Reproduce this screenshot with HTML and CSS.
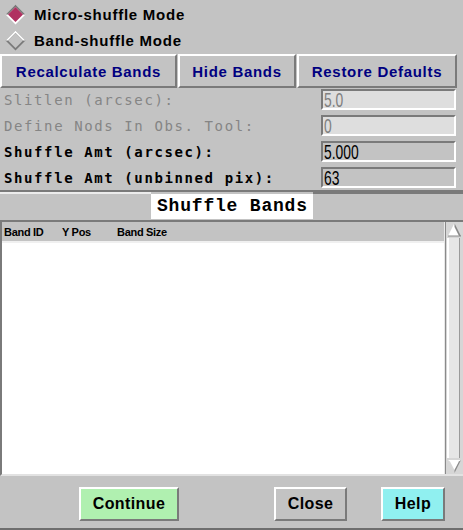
FILE: index.html
```html
<!DOCTYPE html>
<html>
<head>
<meta charset="utf-8">
<link rel="stylesheet" href="styles.css">
</head>
<body>
<div class="win">
  <div class="radios">
    <div class="radio">
      <svg class="dia" width="21" height="21" viewBox="0 0 21 21">
        <polygon points="10.5,0.5 20.5,10.5 10.5,20.5 0.5,10.5" fill="#ffffff"/>
        <polygon points="10.5,0.5 20.5,10.5 18,10.5 10.5,3 3,10.5 0.5,10.5" fill="#7a7a7a"/>
        <polygon points="10.5,3 18,10.5 10.5,18 3,10.5" fill="#b03060"/>
      </svg>
      <span class="rtext">Micro-shuffle Mode</span>
    </div>
    <div class="radio">
      <svg class="dia" width="21" height="21" viewBox="0 0 21 21">
        <polygon points="10.5,0.5 20.5,10.5 10.5,20.5 0.5,10.5" fill="#7a7a7a"/>
        <polygon points="10.5,0.5 20.5,10.5 18,10.5 10.5,3 3,10.5 0.5,10.5" fill="#ffffff"/>
        <polygon points="10.5,3 18,10.5 10.5,18 3,10.5" fill="#c3c3c3"/>
      </svg>
      <span class="rtext">Band-shuffle Mode</span>
    </div>
  </div>
  <div class="actions">
    <button class="btn navy w1">Recalculate Bands</button>
    <button class="btn navy w2">Hide Bands</button>
    <button class="btn navy w3">Restore Defaults</button>
  </div>
  <div class="fields">
    <div class="row off"><span class="lbl">Slitlen (arcsec):</span><span class="fld dis"><span class="val">5.0</span></span></div>
    <div class="row off"><span class="lbl">Define Nods In Obs. Tool:</span><span class="fld dis"><span class="val">0</span></span></div>
    <div class="row"><span class="lbl">Shuffle Amt (arcsec):</span><span class="fld"><span class="val">5.000</span></span></div>
    <div class="row"><span class="lbl">Shuffle Amt (unbinned pix):</span><span class="fld"><span class="val">63</span></span></div>
  </div>
  <div class="sep"></div>
  <div class="titlerow">
    <div class="tl"></div>
    <div class="title">Shuffle Bands</div>
    <div class="tr"></div>
  </div>
  <div class="table">
    <div class="grid">
      <div class="head">
        <span class="c1">Band ID</span>
        <span class="c2">Y Pos</span>
        <span class="c3">Band Size</span>
      </div>
      <div class="tbody"></div>
    </div>
    <div class="scroll">
      <svg class="arrow" width="17" height="15" viewBox="0 0 17 15">
        <polygon points="8.5,1 15,14 2,14" fill="#ffffff"/>
        <polygon points="8.5,1 15,14 13,14 8.5,5" fill="#8a8a8a"/>
        <line x1="2" y1="14" x2="15" y2="14" stroke="#8a8a8a" stroke-width="1"/>
      </svg>
      <div class="thumb"></div>
      <svg class="arrow" width="17" height="15" viewBox="0 0 17 15">
        <polygon points="2,1 15,1 8.5,14" fill="#d8d8d8"/>
        <polygon points="2,1 15,1 13,2.5 8.5,11 4,2.5" fill="#ffffff"/>
        <polygon points="15,1 8.5,14 8.5,11 13,2.5" fill="#8a8a8a"/>
      </svg>
    </div>
  </div>
  <div class="footer">
    <button class="btn fb green">Continue</button>
    <button class="btn fb close">Close</button>
    <button class="btn fb cyan">Help</button>
  </div>
</div>
</body>
</html>
```
FILE: styles.css
```css
html, body {
  margin: 0;
  padding: 0;
  background: #c3c3c3;
}
.win {
  width: 463px;
  height: 530px;
  background: #c3c3c3;
  display: flex;
  flex-direction: column;
  box-sizing: border-box;
  border-bottom: 2px solid #6e6e6e;
  overflow: hidden;
}
.radios {
  padding-top: 1px;
  display: flex;
  flex-direction: column;
}
.radio {
  height: 26px;
  display: flex;
  align-items: center;
  padding-left: 5px;
}
.dia {
  display: block;
  flex: none;
}
.rtext {
  margin-left: 8px;
  font-family: "Liberation Sans", Arial, sans-serif;
  font-weight: bold;
  font-size: 15px;
  letter-spacing: 0.75px;
  color: #000;
}
.actions {
  margin-top: 1px;
  display: flex;
  gap: 1px;
}
.btn {
  box-sizing: border-box;
  height: 34px;
  margin: 0;
  padding: 0;
  background: #c3c3c3;
  border-style: solid;
  border-width: 2px;
  border-color: #ffffff #7a7a7a #7a7a7a #ffffff;
  font-family: "Liberation Sans", Arial, sans-serif;
  font-weight: bold;
  font-size: 15px;
  letter-spacing: 0.7px;
  color: #000;
  display: flex;
  align-items: center;
  justify-content: center;
}
.navy { color: #000080; }
.w1 { width: 177px; }
.w2 { width: 118px; }
.w3 { width: 160px; }
.fields {
  padding-top: 1px;
  display: flex;
  flex-direction: column;
  gap: 5px;
}
.row {
  height: 21px;
  display: flex;
  align-items: center;
}
.lbl {
  padding-left: 4px;
  font-family: "DejaVu Sans Mono", "Liberation Mono", monospace;
  font-weight: bold;
  font-size: 14px;
  letter-spacing: 1.6px;
  color: #000;
  white-space: nowrap;
}
.off .lbl {
  color: #858585;
  font-weight: normal;
}
.fld {
  box-sizing: border-box;
  margin-left: auto;
  margin-right: 7px;
  width: 135px;
  height: 21px;
  border-style: solid;
  border-width: 2px;
  border-color: #7a7a7a #ffffff #ffffff #7a7a7a;
  background: #c3c3c3;
  overflow: hidden;
  line-height: 17px;
  padding-left: 1px;
}
.fld.dis {
  background: #dedede;
}
.val {
  display: inline-block;
  font-family: "Liberation Sans", Arial, sans-serif;
  font-size: 21px;
  line-height: 17px;
  transform: scaleX(0.66);
  transform-origin: left center;
  color: #000;
}
.dis .val {
  color: #808080;
}
.sep {
  margin-top: 2px;
  height: 2px;
  background: #7a7a7a;
}
.titlerow {
  height: 28px;
  display: flex;
}
.tl {
  width: 151px;
  border-top: 2px solid #ececec;
  box-sizing: border-box;
}
.tr {
  flex: 1;
  border-top: 2px solid #7a7a7a;
  box-sizing: border-box;
}
.title {
  margin-top: 2px;
  width: 162px;
  height: 25px;
  background: #ffffff;
  box-sizing: border-box;
  padding-left: 6px;
  font-family: "Liberation Mono", "Courier New", monospace;
  font-weight: bold;
  font-size: 18px;
  letter-spacing: 0.8px;
  line-height: 25px;
  color: #000;
}
.table {
  height: 256px;
  display: flex;
  border-top: 2px solid #7a7a7a;
  border-left: 2px solid #7a7a7a;
  border-bottom: 2px solid #e2e2e2;
  box-sizing: border-box;
}
.grid {
  width: 444px;
  display: flex;
  flex-direction: column;
  border-right: 1px solid #e8e8e8;
}
.head {
  height: 19px;
  background: #c3c3c3;
  border-bottom: 2px solid #f0f0f0;
  display: flex;
  align-items: center;
  font-family: "Liberation Sans", Arial, sans-serif;
  font-weight: bold;
  font-size: 11px;
  letter-spacing: -0.3px;
  color: #000;
}
.c1 { margin-left: 2px; width: 58px; }
.c2 { width: 55px; }
.tbody {
  flex: 1;
  background: #ffffff;
}
.scroll {
  width: 17px;
  flex: none;
  display: flex;
  flex-direction: column;
  background: #d6d6d6;
  border-left: 1px solid #8a8a8a;
}
.arrow {
  display: block;
  flex: none;
}
.thumb {
  flex: 1;
  margin: 1px 3px 1px 1px;
  border-left: 2px solid #ffffff;
  border-right: 1px solid #9a9a9a;
  background: #e6e6e6;
}
.footer {
  flex: 1;
  display: flex;
  align-items: flex-start;
  padding-top: 11px;
  padding-left: 79px;
}
.fb {
  font-size: 16px;
  letter-spacing: 0.4px;
}
.green {
  width: 100px;
  background: #b0f0b0;
}
.close {
  width: 73px;
  margin-left: 95px;
}
.cyan {
  width: 64px;
  margin-left: 34px;
  background: #90f0f0;
}
```
